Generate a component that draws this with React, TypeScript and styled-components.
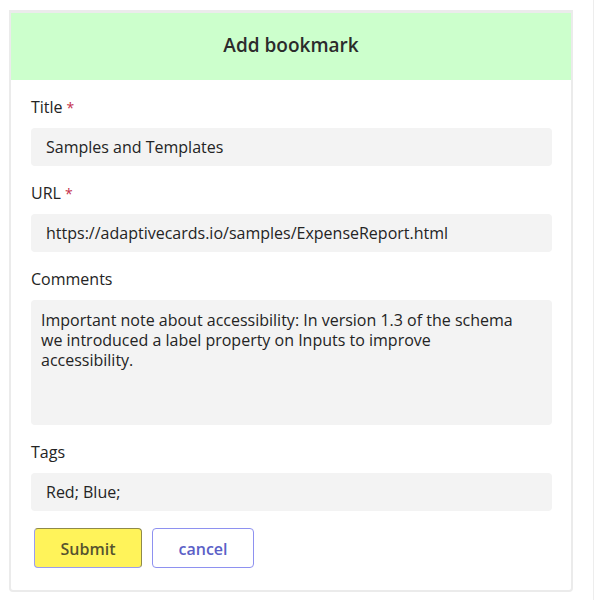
import React from "react";
import styled, { createGlobalStyle } from "styled-components";

const GlobalStyle = createGlobalStyle`
  html, body {
    margin: 0;
    padding: 0;
    background: #ffffff;
  }
  body {
    font-family: "Open Sans", "Noto Sans", sans-serif;
    color: #242424;
  }
`;

const Page = styled.div`
  width: 594px;
  min-height: 600px;
  box-sizing: border-box;
  padding: 10px 0 0 9px;
  border-right: 1px solid #ededed;
`;

const Card = styled.div`
  width: 564px;
  box-sizing: border-box;
  border: 2px solid #ebebeb;
  border-top-width: 3px;
  border-radius: 0 0 4px 4px;
  background: #fff;
  padding-bottom: 22px;
`;

const Header = styled.div`
  height: 67px;
  box-sizing: border-box;
  padding-bottom: 3px;
  background: #ccffcc;
  display: flex;
  align-items: center;
  justify-content: center;
  font-size: 19px;
  font-weight: 600;
  color: #2b2b2b;
`;

const Body = styled.form`
  display: flex;
  flex-direction: column;
  padding: 17px 19px 0 20px;
`;

const Field = styled.div`
  display: flex;
  flex-direction: column;
  gap: 11px;
  margin-bottom: 17px;
`;

const Label = styled.label`
  display: block;
  height: 20px;
  font-size: 16px;
  line-height: 20px;
  color: #242424;
`;

const Required = styled.span`
  color: #c4314b;
  font-size: 14px;
  line-height: 0;
  margin-left: 4px;
`;

const Input = styled.input`
  height: 38px;
  box-sizing: border-box;
  border: none;
  border-radius: 4px;
  background: #f3f3f3;
  padding: 0 15px;
  font-family: inherit;
  font-size: 16px;
  color: #242424;
  outline: none;
`;

const TextArea = styled.textarea`
  height: 125px;
  box-sizing: border-box;
  border: none;
  border-radius: 4px;
  background: #f3f3f3;
  padding: 10px 25px 10px 10px;
  overflow: hidden;
  font-family: inherit;
  font-size: 16px;
  line-height: 20px;
  color: #242424;
  resize: none;
  outline: none;
`;

const Actions = styled.div`
  display: flex;
  gap: 10px;
  padding-left: 3px;
`;

const Button = styled.button<{ $primary?: boolean }>`
  height: 40px;
  box-sizing: border-box;
  padding-top: 2px;
  border-radius: 4px;
  font-family: inherit;
  font-size: 16px;
  font-weight: 600;
  cursor: pointer;
  ${(p) =>
    p.$primary
      ? `
    width: 108px;
    background: #fff35a;
    color: #57532f;
    border: 1px solid #8f8a4a;
    border-left-color: #9a9cf0;
    border-bottom-color: #9a9cf0;
  `
      : `
    width: 102px;
    background: #ffffff;
    color: #5b5fc7;
    border: 1px solid #8e91f0;
  `}
`;

export default function App() {
  return (
    <Page>
      <GlobalStyle />
      <Card>
        <Header>Add bookmark</Header>
        <Body onSubmit={(e) => e.preventDefault()}>
          <Field>
            <Label>
              Title<Required>*</Required>
            </Label>
            <Input defaultValue="Samples and Templates" />
          </Field>
          <Field>
            <Label>
              URL<Required>*</Required>
            </Label>
            <Input defaultValue="https://adaptivecards.io/samples/ExpenseReport.html" />
          </Field>
          <Field>
            <Label>Comments</Label>
            <TextArea defaultValue="Important note about accessibility: In version 1.3 of the schema we introduced a label property on Inputs to improve accessibility." />
          </Field>
          <Field>
            <Label>Tags</Label>
            <Input defaultValue="Red; Blue;" />
          </Field>
          <Actions>
            <Button type="submit" $primary>
              Submit
            </Button>
            <Button type="button">cancel</Button>
          </Actions>
        </Body>
      </Card>
    </Page>
  );
}
